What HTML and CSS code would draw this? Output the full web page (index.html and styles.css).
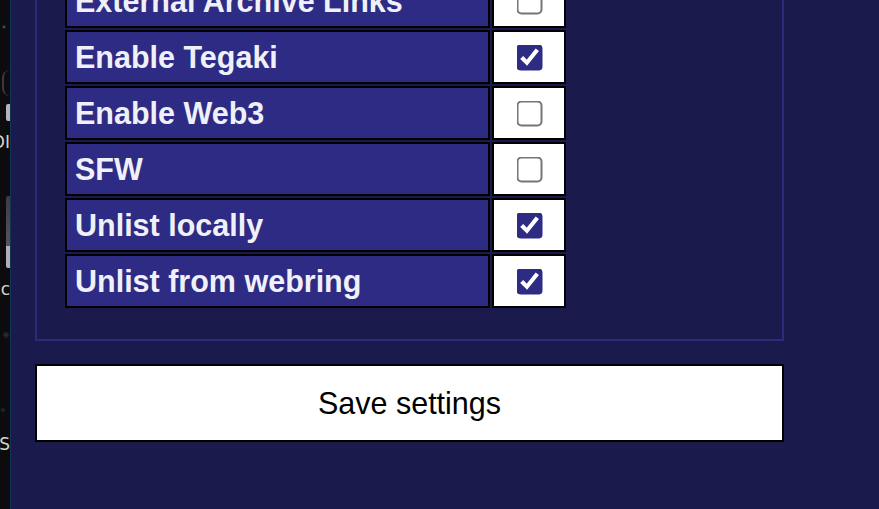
FILE: index.html
```html
<!DOCTYPE html>
<html lang="en">
<head>
    <meta charset="UTF-8">
    <meta name="viewport" content="width=device-width, initial-scale=1.0">
    <title>Board Settings</title>
    <link rel="stylesheet" href="styles.css">
</head>
<body>
    <div class="backdrop">
        <span class="ring"></span>
        <span class="tab tab-short"></span>
        <span class="peek peek-first">OI</span>
        <span class="tab tab-long"></span>
        <span class="peek peek-second">Xc</span>
        <span class="peek peek-third">S</span>
    </div>

    <main class="page">
        <form id="settingsForm" class="settings" onsubmit="return false">
            <fieldset class="group">
                <table class="options">
                    <tr>
                        <td class="label">External Archive Links</td>
                        <td class="check"><input type="checkbox" name="archiveLinks"></td>
                    </tr>
                    <tr>
                        <td class="label">Enable Tegaki</td>
                        <td class="check"><input type="checkbox" name="tegaki" checked></td>
                    </tr>
                    <tr>
                        <td class="label">Enable Web3</td>
                        <td class="check"><input type="checkbox" name="web3"></td>
                    </tr>
                    <tr>
                        <td class="label">SFW</td>
                        <td class="check"><input type="checkbox" name="sfw"></td>
                    </tr>
                    <tr>
                        <td class="label">Unlist locally</td>
                        <td class="check"><input type="checkbox" name="unlistLocal" checked></td>
                    </tr>
                    <tr>
                        <td class="label">Unlist from webring</td>
                        <td class="check"><input type="checkbox" name="unlistWebring" checked></td>
                    </tr>
                </table>
            </fieldset>

            <input type="submit" class="save" value="Save settings">
        </form>
    </main>
</body>
</html>
```

FILE: styles.css
```css
html, body {
    height: 100%;
}

body {
    margin: 0;
    display: flex;
    overflow: hidden;
    font-family: "Liberation Sans", Arial, sans-serif;
    background-color: #0b0b0d;
}

/* strip of the page behind, cut off on the left */
.backdrop {
    flex: none;
    width: 10px;
    display: flex;
    flex-direction: column;
    align-items: flex-end;
    overflow: hidden;
    border-right: 1px solid #0e3759;
    background:
        radial-gradient(circle at 4px 27px, rgba(200, 210, 230, 0.5) 0, transparent 2px),
        radial-gradient(circle at 6px 335px, rgba(160, 170, 190, 0.25) 0, transparent 4px),
        radial-gradient(circle at 3px 410px, rgba(160, 170, 190, 0.2) 0, transparent 3px),
        #0c0c0e;
}

.ring {
    width: 8px;
    height: 26px;
    margin-top: 70px;
    border-left: 2px solid #3a3a40;
    border-radius: 8px 0 0 8px;
    box-sizing: border-box;
}

.tab {
    display: block;
    width: 4px;
    border-radius: 2px 0 0 2px;
}

.tab-short {
    height: 17px;
    margin-top: 8px;
    background-color: #b4b4b8;
}

.tab-long {
    height: 72px;
    margin-top: 45px;
    background: linear-gradient(#3c3b3e 0, #55545a 70%, #b0b0b4 70%);
}

.peek {
    display: flex;
    justify-content: flex-end;
    width: 10px;
    white-space: nowrap;
    font-family: "DejaVu Sans", sans-serif;
    font-size: 17px;
    line-height: 18px;
    color: #d8d4c8;
}

.peek-first {
    margin-top: 12px;
}

.peek-second {
    margin-top: 12px;
}

.peek-third {
    margin-top: 137px;
}

.page {
    flex: 1;
    padding: 0 24px;
    background-color: #1b1a4c;
}

.settings {
    width: 749px;
    margin-top: -56px;
}

.group {
    margin: 0;
    padding: 26px 26px 29px;
    border: 2px solid #2c2a7a;
}

.options {
    border-spacing: 2px;
}

.options td {
    height: 50px;
    padding: 0;
    border: 2px solid #000;
}

.label {
    width: 405px;
    padding: 0 8px !important;
    background-color: #2e2b85;
    color: #f0f0f8;
    font-size: 30.5px;
    font-weight: bold;
    white-space: nowrap;
}

.check {
    width: 70px;
    text-align: center;
    vertical-align: middle;
    background-color: #fff;
}

.check input {
    margin: 0;
    vertical-align: middle;
    transform: scale(2);
    accent-color: #2e2b85;
}

.save {
    display: block;
    width: 100%;
    height: 78px;
    margin-top: 23px;
    border: 2px solid #000;
    border-radius: 0;
    background-color: #fff;
    color: #000;
    font-family: "Liberation Sans", Arial, sans-serif;
    font-size: 30.5px;
}
```
